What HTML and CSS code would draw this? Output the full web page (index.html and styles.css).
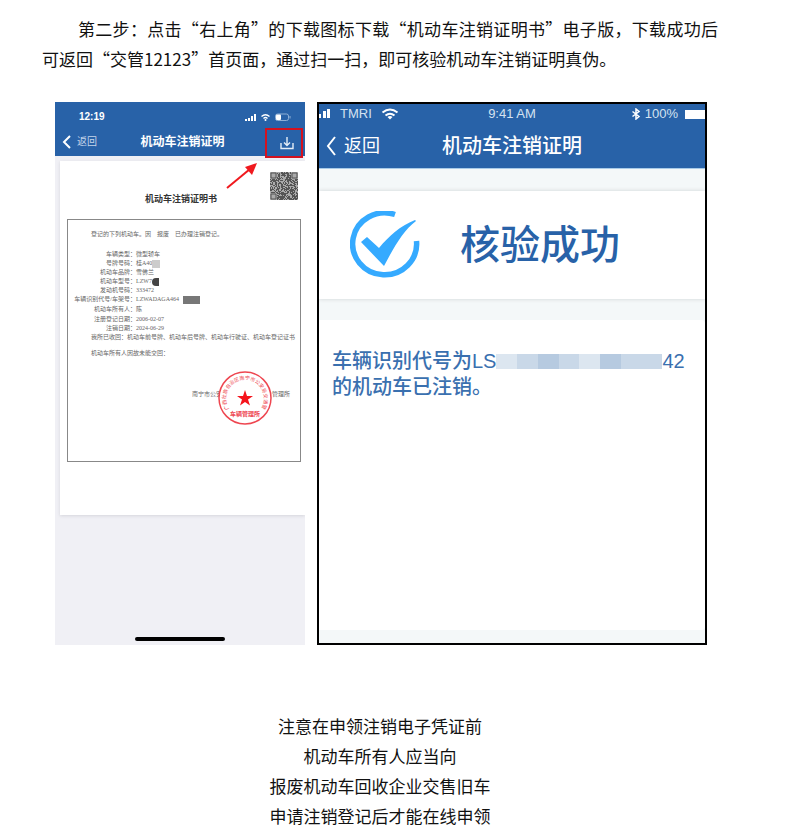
FILE: index.html
```html
<!DOCTYPE html>
<html lang="zh-CN">
<head>
  <meta charset="UTF-8">
  <meta name="viewport" content="width=device-width, initial-scale=1">
  <title>机动车注销证明</title>
  <link rel="stylesheet" href="styles.css">
</head>
<body>
  <article class="article">
    <p class="step">第二步：点击“右上角”的下载图标下载“机动车注销证明书”电子版，下载成功后可返回“交管12123”首页面，通过扫一扫，即可核验机动车注销证明真伪。</p>

    <div class="screens">
      <!-- 电子证明页面 -->
      <section class="phone phone-cert">
        <header class="bar">
          <div class="status">
            <span>12:19</span>
            <svg width="48" height="10" viewBox="0 0 48 10" aria-hidden="true">
              <path d="M1 7h2v2H1zM4 6h2v3H4zM7 4h2v5H7zM10 2h2v7h-2z" fill="#fff"/>
              <path d="M17.500 4.500q4-3.500 8 0M19.500 6.500q2-1.800 4 0" fill="none" stroke="#fff" stroke-width="1.400"/>
              <circle cx="21.500" cy="8" r="1" fill="#fff"/>
              <rect x="31.500" y="2" width="13" height="6.500" rx="2" fill="none" stroke="#8fb0d6"/>
              <rect x="32" y="2.500" width="5" height="5.500" rx="1" fill="#fff"/>
              <path d="M46 4v2.500" stroke="#8fb0d6"/>
            </svg>
          </div>
          <nav class="nav">
            <button class="back" type="button">
              <svg width="10" height="16" viewBox="0 0 10 16" aria-hidden="true"><path d="M8 2L2 8l6 6" fill="none" stroke="#fff" stroke-width="2"/></svg>
              返回
            </button>
            <h2>机动车注销证明</h2>
            <button class="download" type="button" aria-label="下载">
              <svg width="14" height="14" viewBox="0 0 14 14" aria-hidden="true"><path d="M7 1v8M4 6.500l3 3 3-3M1 7v5.500h12V7" fill="none" stroke="#e4edf7" stroke-width="1.400"/></svg>
            </button>
          </nav>
          <svg class="arrow" width="34" height="30" viewBox="0 0 34 30" aria-hidden="true">
            <path d="M2 27L25 8" stroke="#f0191e" stroke-width="2"/>
            <path d="M32 2L20 6l7 8z" fill="#f0191e"/>
          </svg>
        </header>

        <div class="cert">
          <div class="cert-head">
            <h3>机动车注销证明书</h3>
            <svg id="qr" class="qr" viewBox="0 0 28 28" aria-hidden="true"></svg>
          </div>
          <div class="cert-body">
            <p>登记的下列机动车。因&emsp;报废&emsp;已办理注销登记。</p>
            <dl>
              <dt>车辆类型：</dt><dd>微型轿车</dd>
              <dt>号牌号码：</dt><dd>桂A40<i class="mask light"></i></dd>
              <dt>机动车品牌：</dt><dd>雪佛兰</dd>
              <dt>机动车型号：</dt><dd>LZW7<i class="mask dark"></i></dd>
              <dt>发动机号码：</dt><dd>333472</dd>
              <dt>车辆识别代号/车架号：</dt><dd>LZWADAGA464<i class="mask"></i></dd>
            </dl>
            <dl>
              <dt>机动车所有人：</dt><dd>陈</dd>
            </dl>
            <dl>
              <dt>注册登记日期：</dt><dd>2006-02-07</dd>
              <dt>注销日期：</dt><dd>2024-06-29</dd>
            </dl>
            <p>我所已收回：机动车前号牌、机动车后号牌、机动车行驶证、机动车登记证书</p>
            <p class="note">机动车所有人因故未能交回：</p>
            <div class="sign">
              <span>南宁市公安</span>
              <span>管理所</span>
              <svg class="stamp" width="54" height="54" viewBox="0 0 54 54" aria-hidden="true">
                <circle cx="27" cy="27" r="26" fill="#fff" stroke="#ee4650" stroke-width="1.500"/>
                <path id="ring" d="M11 38A19 19 0 1 1 43 38" fill="none"/>
                <text class="stamp-ring"><textPath href="#ring">广西壮族自治区南宁市公安局交通警</textPath></text>
                <path d="M27 19l2 6h6l-5 3.600 2 6-5-3.700-5 3.700 2-6-5-3.600h6z" fill="#f5141c"/>
                <text class="stamp-name" x="27" y="45" text-anchor="middle">车辆管理所</text>
              </svg>
            </div>
          </div>
        </div>
        <div class="home"></div>
      </section>

      <!-- 核验结果页面 -->
      <section class="phone phone-check">
        <header class="bar">
          <div class="status">
            <span class="carrier">
              <svg width="12" height="10" viewBox="0 0 12 10" aria-hidden="true"><path d="M0 5h2v4H0zM4 2h3v7H4zM8 0h3v9H8z" fill="#fff"/></svg>
              TMRI
              <svg width="18" height="12" viewBox="0 0 18 12" aria-hidden="true">
                <path d="M1.500 4.500q7.500-6 15 0M4.500 7.500q4.500-3.500 9 0" fill="none" stroke="#fff" stroke-width="2"/>
                <path d="M6.500 9q2.500-2 5 0L9 11.500z" fill="#fff"/>
              </svg>
            </span>
            <span>9:41 AM</span>
            <span class="power">
              <svg width="10" height="12" viewBox="0 0 10 12" aria-hidden="true"><path d="M1.500 3.500l6.500 5L5 11V1l3 2.500-6.500 5" fill="none" stroke="#fff" stroke-width="1.500"/></svg>
              100%
              <i class="battery"></i>
            </span>
          </div>
          <nav class="nav">
            <button class="back" type="button">
              <svg width="12" height="22" viewBox="0 0 12 22" aria-hidden="true"><path d="M10 2L3 11l7 9" fill="none" stroke="#fff" stroke-width="2"/></svg>
              返回
            </button>
            <h2>机动车注销证明</h2>
          </nav>
        </header>
        <div class="result">
          <svg width="70" height="68" viewBox="0 0 70 68" aria-hidden="true">
            <path d="M45 3.500A32 31 0 1 0 66.500 30" fill="none" stroke="#35aaff" stroke-width="5.500"/>
            <path d="M11 31l6-5 12 11C39 25 50 15 65 9l1 1C53 20 44 36 34 55z" fill="#35aaff"/>
          </svg>
          <strong>核验成功</strong>
        </div>
        <div class="detail">
          <p>车辆识别代号为LS<span class="mosaic"><i></i><i></i><i></i><i></i><i></i><i></i><i></i><i></i></span>42</p>
          <p>的机动车已注销。</p>
        </div>
      </section>
    </div>

    <div class="tips">
      <p>注意在申领注销电子凭证前</p>
      <p>机动车所有人应当向</p>
      <p>报废机动车回收企业交售旧车</p>
      <p>申请注销登记后才能在线申领</p>
    </div>
  </article>
  <script src="script.js"></script>
</body>
</html>
```
FILE: styles.css
```css
* {
  margin: 0;
  padding: 0;
  box-sizing: border-box;
}
body {
  font-family: "Noto Sans CJK SC", sans-serif;
  font-size: 17px;
  line-height: 30px;
  color: #111;
  background: #fff;
}
i {
  font-style: normal;
}
button {
  font: inherit;
  color: inherit;
  background: none;
  border: none;
  cursor: pointer;
}
.article {
  padding: 14px 73px 0 42px;
}
.step {
  text-indent: 36px;
  text-align: justify;
}
.screens {
  display: grid;
  grid-template-columns: 250fr 390fr;
  gap: 12px;
  padding: 0 11px 0 13px;
  margin-top: 28px;
}
.phone {
  display: flex;
  flex-direction: column;
  min-width: 0;
  min-height: 543px;
  overflow: hidden;
  font-family: "Liberation Sans", "Noto Sans CJK SC", sans-serif;
}
.bar {
  position: relative;
  background: #2862a8;
  color: #fff;
}
.status,
.nav {
  display: flex;
  align-items: center;
  justify-content: space-between;
}
.back {
  display: flex;
  align-items: center;
}

/* 左侧手机 */
.phone-cert {
  background: #f0f0f5;
}
.phone-cert .status {
  padding: 5px 13px 0 24px;
  font-size: 10px;
  font-weight: 700;
  line-height: 20px;
}
.phone-cert .nav {
  display: grid;
  grid-template-columns: 1fr auto 1fr;
  padding: 1px 2px 0 7px;
  line-height: 28px;
}
.phone-cert .back {
  gap: 5px;
  font-size: 10px;
  color: #c5d6ea;
}
.phone-cert h2 {
  font-size: 12px;
}
.download {
  justify-self: end;
  display: flex;
  align-items: center;
  justify-content: center;
  width: 38px;
  height: 30px;
  padding-left: 6px;
  margin-bottom: -2px;
  border: 2px solid #d3121f;
}
.arrow {
  position: absolute;
  right: 46px;
  top: 59px;
  z-index: 1;
}
.cert {
  margin: 5px 0 0 5px;
  padding: 11px 4px 53px 7px;
  background: #fff;
  box-shadow: 0 1px 3px #d6d6dc;
}
.cert-head {
  display: grid;
  grid-template-columns: 1fr 28px;
  padding: 0 3px 0 25px;
}
.cert-head h3 {
  padding-top: 18px;
  font-size: 9px;
  line-height: 18px;
  text-align: center;
  color: #333;
}
.qr {
  width: 28px;
  height: 28px;
}
.cert-body {
  min-height: 243px;
  margin-top: 11px;
  padding-top: 10px;
  border: 1px solid #888;
  font-family: "Liberation Serif", "Noto Sans CJK SC", serif;
  font-size: 6px;
  line-height: 9px;
  color: #666;
  white-space: nowrap;
}
.cert-body p {
  padding-left: 23px;
}
.cert-body dl {
  display: grid;
  grid-template-columns: 68px 1fr;
  margin-top: 1px;
}
.cert-body p + dl {
  margin-top: 11px;
}
.cert-body dt {
  justify-self: end;
}
.mask {
  display: inline-block;
  width: 17px;
  height: 8px;
  margin-left: 4px;
  background: #777;
  vertical-align: middle;
}
.mask.light {
  width: 8px;
  margin-left: 0;
  background: #ccc;
}
.mask.dark {
  width: 7px;
  margin-left: 0;
  background: #444;
  border-radius: 4px 0 0 4px;
}
.cert-body .note {
  margin-top: 7px;
}
.sign {
  position: relative;
  display: flex;
  justify-content: space-between;
  margin-top: 32px;
  padding: 0 10px 0 124px;
}
.stamp {
  position: absolute;
  right: 28px;
  top: -19px;
}
.stamp-ring {
  font-size: 5px;
  fill: #ee4650;
}
.stamp-name {
  font-size: 6px;
  font-weight: 700;
  fill: #ee4650;
}
.home {
  width: 90px;
  height: 4px;
  margin: auto auto 4px;
  background: #000;
  border-radius: 2px;
}

/* 右侧手机 */
.phone-check {
  background: #f4f8f9;
  border: 2px solid #000;
}
.phone-check .bar {
  border-bottom: 1px solid #a9cbe8;
}
.phone-check .status {
  display: grid;
  grid-template-columns: 1fr auto 1fr;
  font-size: 13px;
  line-height: 20px;
  color: #d5e2f0;
}
.carrier,
.power {
  display: flex;
  align-items: center;
  gap: 9px;
}
.power {
  justify-content: flex-end;
  gap: 4px;
}
.battery {
  width: 20px;
  height: 9px;
  margin-left: 3px;
  background: #fff;
}
.phone-check .nav {
  display: grid;
  grid-template-columns: 1fr auto 1fr;
  padding: 0 6px;
  line-height: 44px;
}
.phone-check .back {
  gap: 7px;
  font-size: 18px;
}
.phone-check h2 {
  font-size: 20px;
  font-weight: 500;
}
.result {
  display: flex;
  align-items: center;
  gap: 40px;
  min-height: 108px;
  margin-top: 22px;
  padding-left: 31px;
  background: #fff;
  box-shadow: 0 0 4px #cfd3d5;
  color: #2862a8;
}
.result strong {
  font-size: 40px;
  font-weight: 500;
  line-height: 60px;
}
.detail {
  flex: 1;
  margin: 21px 0 13px;
  padding: 28px 13px;
  background: #fff;
  border-radius: 0 4px 4px 0;
  font-size: 20px;
  font-weight: 500;
  line-height: 26px;
  color: #3a70af;
  white-space: nowrap;
}
.mosaic {
  display: inline-flex;
  width: 166px;
  height: 15px;
  vertical-align: -1px;
}
.mosaic i {
  flex: 1;
  background: #c9d8e8;
}
.mosaic i:nth-child(3n) {
  background: #b6cae0;
}
.mosaic i:nth-child(4n + 1) {
  background: #dce6f0;
}

.tips {
  margin-top: 66px;
  text-align: center;
}
```
FILE: script.js
```js
// 绘制二维码点阵
const qr = document.getElementById('qr');
let seed = 7;
let d = '';
for (let y = 0; y < 28; y++) {
  for (let x = 0; x < 28; x++) {
    seed = (seed * 16807) % 2147483647;
    if (seed % 100 < 55) {
      d += `M${x} ${y}h1v1h-1z`;
    }
  }
}
// 三个定位角
const corners = [[0, 0], [21, 0], [0, 21]]
  .map(([x, y]) => `<path d="M${x} ${y}h7v7h-7z" fill="#aaa"/><path d="M${x + 1} ${y + 1}h5v5h-5z" fill="none" stroke="#555"/>`)
  .join('');
qr.innerHTML = `<path d="M0 0h28v28H0z" fill="#aaa"/><path d="${d}" fill="#555"/>${corners}`;
```
